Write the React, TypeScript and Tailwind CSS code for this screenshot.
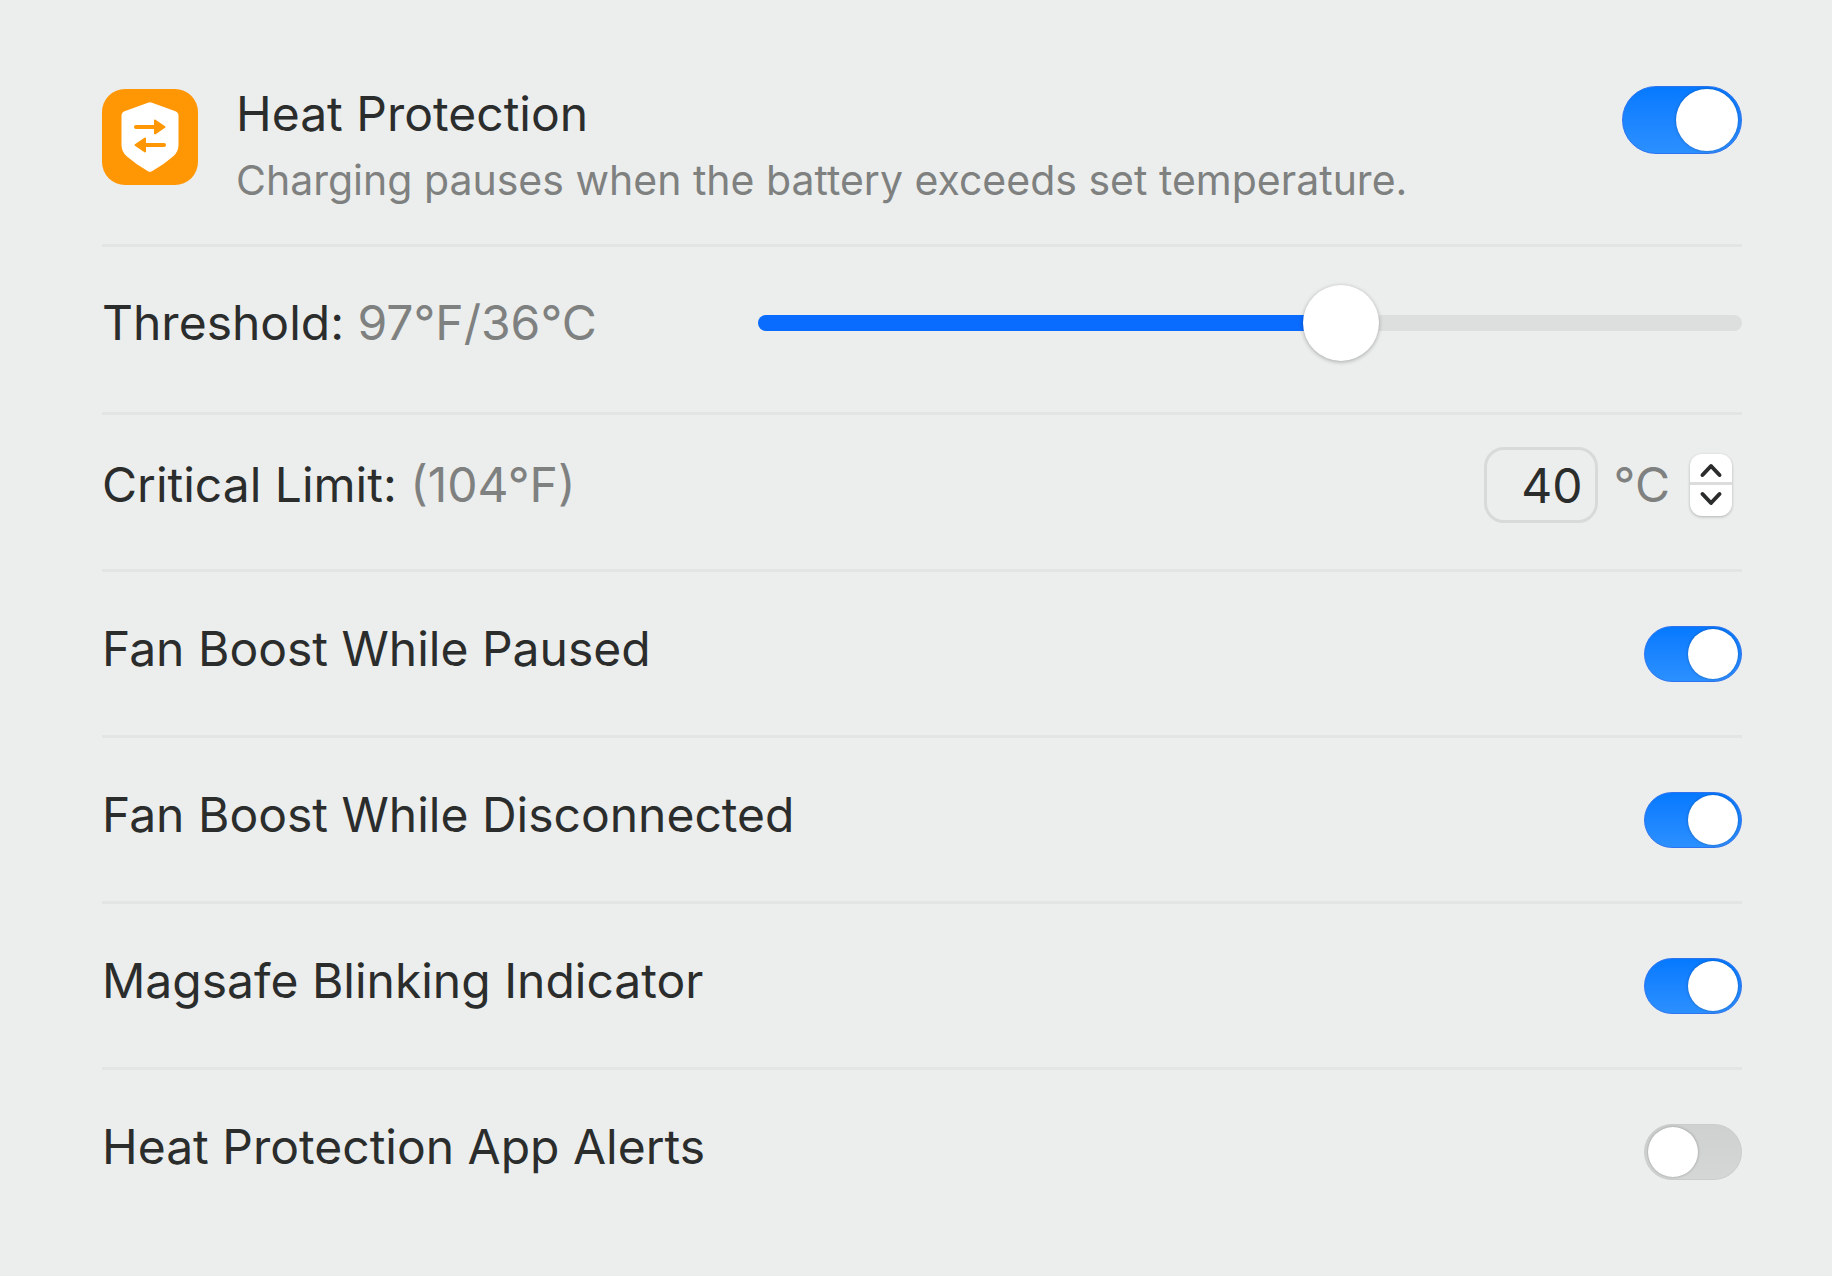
import { useState, type CSSProperties } from 'react';
import { clsx } from 'clsx';

const MIN_THRESHOLD = 30;
const MAX_THRESHOLD = 40;

function toFahrenheit(celsius: number) {
  return Math.round((celsius * 9) / 5 + 32);
}

interface SwitchProps {
  id: string;
  checked: boolean;
  large?: boolean;
  onChange: (checked: boolean) => void;
}

function Switch({ id, checked, large = false, onChange }: SwitchProps) {
  return (
    <input
      checked={checked}
      className={clsx(
        'flex shrink-0 cursor-pointer appearance-none items-center rounded-full border bg-linear-to-b px-[3px]',
        'before:rounded-full before:bg-white before:shadow-[0_0_3px_rgba(0,0,0,0.3)]',
        large ? 'h-[68px] w-[120px] before:size-[62px]' : 'h-14 w-[98px] before:size-[50px]',
        checked
          ? 'justify-end border-[#2f74ee] from-[#0479ff] to-[#2b90ff]'
          : 'justify-start border-[#cbcdcc] from-[#cfd1d0] to-[#d5d7d6]',
      )}
      id={id}
      onChange={(e) => onChange(e.currentTarget.checked)}
      role="switch"
      type="checkbox"
    />
  );
}

function ShieldIcon() {
  return (
    <svg aria-hidden="true" className="size-24 shrink-0" viewBox="0 0 96 96">
      <rect fill="#ff9705" height="96" rx="23" width="96" />
      <path
        d="M46 13.700 Q48 12.900 50 13.700 L73.500 22.300 Q76.500 23.500 76.500 27 V56 Q76.500 63 71 67.500 Q62 75.500 50 82.200 Q48 83.300 46 82.200 Q34 75.500 25 67.500 Q19.500 63 19.500 56 V27 Q19.500 23.500 22.500 22.300 Z"
        fill="#fff"
      />
      <g fill="#ff9705" stroke="#ff9705" strokeLinecap="round" strokeLinejoin="round">
        <path d="M34 38 H54" strokeWidth="4" />
        <path d="M53 31.500 L62.500 38 L53 44.500 Z" strokeWidth="2" />
        <path d="M62 56 H42" strokeWidth="4" />
        <path d="M43 49.500 L33.500 56 L43 62.500 Z" strokeWidth="2" />
      </g>
    </svg>
  );
}

const initialOptions = [
  { id: 'fan-paused', label: 'Fan Boost While Paused', enabled: true },
  { id: 'fan-disconnected', label: 'Fan Boost While Disconnected', enabled: true },
  { id: 'magsafe', label: 'Magsafe Blinking Indicator', enabled: true },
  { id: 'app-alerts', label: 'Heat Protection App Alerts', enabled: false },
];

export default function App() {
  const [enabled, setEnabled] = useState(true);
  const [threshold, setThreshold] = useState(36);
  const [limit, setLimit] = useState(40);
  const [options, setOptions] = useState(initialOptions);

  const fill = ((threshold - MIN_THRESHOLD) / (MAX_THRESHOLD - MIN_THRESHOLD)) * 100;

  function toggleOption(id: string, value: boolean) {
    setOptions(options.map((o) => (o.id === id ? { ...o, enabled: value } : o)));
  }

  return (
    <main className="min-h-screen bg-[#eceeed] pt-[86px] pr-[90px] pl-[102px] font-[Inter,sans-serif] text-[48px] leading-[56px] text-[#2b2d2c]">
      {/* Header */}
      <header className="flex items-start border-b-[3px] border-[#e3e5e4] pb-9">
        <div className="pt-[3px]">
          <ShieldIcon />
        </div>
        <div className="ml-[38px] flex-1">
          <h1>
            <label htmlFor="heat-protection">Heat Protection</label>
          </h1>
          <p className="mt-2.5 text-[41px] text-[#7f8180]">
            Charging pauses when the battery exceeds set temperature.
          </p>
        </div>
        <Switch checked={enabled} id="heat-protection" large onChange={setEnabled} />
      </header>

      {/* Threshold */}
      <div className="flex min-h-[168px] items-center justify-between border-b-[3px] border-[#e3e5e4] pb-3.5">
        <label htmlFor="threshold">
          Threshold:{' '}
          <span className="text-[#7f8180]">
            {toFahrenheit(threshold)}°F/{threshold}°C
          </span>
        </label>
        <input
          className="h-[76px] w-3/5 cursor-pointer appearance-none bg-transparent [&::-webkit-slider-runnable-track]:h-4 [&::-webkit-slider-runnable-track]:rounded-full [&::-webkit-slider-runnable-track]:bg-[linear-gradient(to_right,#0a6bff_var(--fill),#dddfde_var(--fill))] [&::-webkit-slider-thumb]:-mt-[30px] [&::-webkit-slider-thumb]:size-[76px] [&::-webkit-slider-thumb]:appearance-none [&::-webkit-slider-thumb]:rounded-full [&::-webkit-slider-thumb]:bg-white [&::-webkit-slider-thumb]:shadow-[0_1px_4px_rgba(0,0,0,0.3)]"
          id="threshold"
          max={MAX_THRESHOLD}
          min={MIN_THRESHOLD}
          onChange={(e) => setThreshold(Number(e.currentTarget.value))}
          style={{ '--fill': `${fill}%` } as CSSProperties}
          type="range"
          value={threshold}
        />
      </div>

      {/* Critical limit */}
      <div className="flex min-h-[157px] items-center justify-between border-b-[3px] border-[#e3e5e4] pb-3.5">
        <label htmlFor="critical-limit">
          Critical Limit: <span className="text-[#7f8180]">({toFahrenheit(limit)}°F)</span>
        </label>
        <div className="flex items-center pr-2.5">
          <input
            className="h-[76px] w-[114px] rounded-[20px] border-[3px] border-[#d8dad9] bg-transparent pr-3 text-right"
            id="critical-limit"
            inputMode="numeric"
            onChange={(e) => setLimit(Number(e.currentTarget.value) || 0)}
            type="text"
            value={limit}
          />
          <span className="ml-4 text-[#7f8180]">°C</span>
          <div className="ml-5 flex w-[42px] flex-col overflow-hidden rounded-xl bg-white shadow-[0_1px_3px_rgba(0,0,0,0.25)]">
            <button
              aria-label="Increase limit"
              className="flex h-[31px] items-center justify-center border-b-[3px] border-[#dcdcdc] pt-1"
              onClick={() => setLimit(limit + 1)}
              type="button"
            >
              <svg className="h-4 w-6" fill="none" stroke="#2b2d2c" strokeWidth="4" viewBox="0 0 24 16">
                <path d="M3.500 13 L12 4 L20.500 13" strokeLinecap="round" strokeLinejoin="round" />
              </svg>
            </button>
            <button
              aria-label="Decrease limit"
              className="flex h-[31px] items-center justify-center pb-1"
              onClick={() => setLimit(limit - 1)}
              type="button"
            >
              <svg className="h-4 w-6" fill="none" stroke="#2b2d2c" strokeWidth="4" viewBox="0 0 24 16">
                <path d="M3.500 3 L12 12 L20.500 3" strokeLinecap="round" strokeLinejoin="round" />
              </svg>
            </button>
          </div>
        </div>
      </div>

      {/* Options */}
      {options.map((option) => (
        <div
          className="flex min-h-[166px] items-center justify-between border-b-[3px] border-[#e3e5e4] last:border-transparent"
          key={option.id}
        >
          <label className="pb-2.5" htmlFor={option.id}>
            {option.label}
          </label>
          <Switch
            checked={option.enabled}
            id={option.id}
            onChange={(value) => toggleOption(option.id, value)}
          />
        </div>
      ))}
    </main>
  );
}
